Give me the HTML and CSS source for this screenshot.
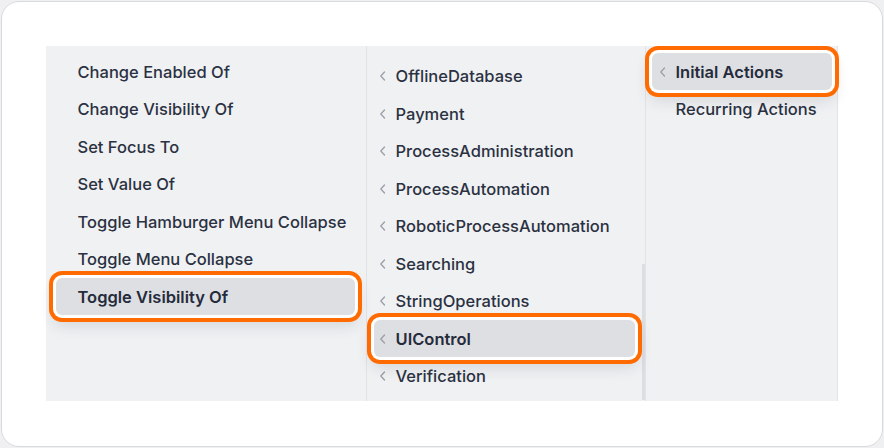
FILE: index.html
```html
<!DOCTYPE html>
<html>
<head>
<meta charset="utf-8">
<link rel="stylesheet" href="styles.css">
</head>
<body>
<div class="card">
  <div class="panel">
    <div class="col col1">
      <div class="item">Change Enabled Of</div>
      <div class="item">Change Visibility Of</div>
      <div class="item">Set Focus To</div>
      <div class="item">Set Value Of</div>
      <div class="item">Toggle Hamburger Menu Collapse</div>
      <div class="item">Toggle Menu Collapse</div>
      <div class="item selected">Toggle Visibility Of</div>
    </div>
    <div class="col col2">
      <div class="item"><svg class="chev" viewBox="0 0 8 12"><path d="M5.5 2 L1.8 6 L5.5 10"/></svg>OfflineDatabase</div>
      <div class="item"><svg class="chev" viewBox="0 0 8 12"><path d="M5.5 2 L1.8 6 L5.5 10"/></svg>Payment</div>
      <div class="item"><svg class="chev" viewBox="0 0 8 12"><path d="M5.5 2 L1.8 6 L5.5 10"/></svg>ProcessAdministration</div>
      <div class="item"><svg class="chev" viewBox="0 0 8 12"><path d="M5.5 2 L1.8 6 L5.5 10"/></svg>ProcessAutomation</div>
      <div class="item"><svg class="chev" viewBox="0 0 8 12"><path d="M5.5 2 L1.8 6 L5.5 10"/></svg>RoboticProcessAutomation</div>
      <div class="item"><svg class="chev" viewBox="0 0 8 12"><path d="M5.5 2 L1.8 6 L5.5 10"/></svg>Searching</div>
      <div class="item"><svg class="chev" viewBox="0 0 8 12"><path d="M5.5 2 L1.8 6 L5.5 10"/></svg>StringOperations</div>
      <div class="item selected"><svg class="chev" viewBox="0 0 8 12"><path d="M5.5 2 L1.8 6 L5.5 10"/></svg>UIControl</div>
      <div class="item"><svg class="chev" viewBox="0 0 8 12"><path d="M5.5 2 L1.8 6 L5.5 10"/></svg>Verification</div>
      <div class="scrollthumb"></div>
    </div>
    <div class="col col3">
      <div class="item selected"><svg class="chev" viewBox="0 0 8 12"><path d="M5.5 2 L1.8 6 L5.5 10"/></svg>Initial Actions</div>
      <div class="item plain">Recurring Actions</div>
    </div>
  </div>
</div>
</body>
</html>
```

FILE: styles.css
```css
html, body {
  margin: 0;
  padding: 0;
}
body {
  background: #eef0f2;
  width: 884px;
  height: 448px;
  font-family: Inter, "Noto Sans", sans-serif;
}
.card {
  box-sizing: border-box;
  width: 882px;
  height: 446px;
  margin: 1px;
  background: #ffffff;
  border: 1.5px solid #d8dadf;
  border-radius: 18px;
  padding: 43.5px 0 0 43.5px;
}
.panel {
  display: flex;
  width: 792px;
  height: 355px;
  background: #f0f1f3;
}
.col {
  box-sizing: border-box;
  position: relative;
  display: flex;
  flex-direction: column;
  gap: 0.5px;
  border-right: 1px solid #e1e3e7;
}
.col1 {
  width: 321px;
  padding: 7.5px 11px 0 10px;
}
.col2 {
  width: 279px;
  padding: 12px 10px 0 7px;
}
.col3 {
  width: 192px;
  padding: 7.5px 5px 0 6px;
}
.item {
  display: flex;
  align-items: center;
  height: 37px;
  flex: none;
  padding-left: 22px;
  font-size: 16.5px;
  font-weight: 500;
  color: #2b3142;
  border-radius: 6px;
  white-space: nowrap;
  position: relative;
}
.col2 .item {
  padding-left: 5px;
}
.col3 .item {
  padding-left: 7px;
}
.col3 .item.plain {
  padding-left: 24px;
}
.chev {
  width: 8px;
  height: 12px;
  margin-right: 9px;
  flex: none;
  fill: none;
  stroke: #9a9ea7;
  stroke-width: 1.3;
  stroke-linecap: round;
  stroke-linejoin: round;
}
.item.selected {
  background: #dedfe3;
  font-weight: 600;
  color: #252b3b;
  z-index: 2;
  box-shadow: 0 0 0 3px #ffffff, 0 0 0 7px #ff6b00, 0 8px 16px 2px rgba(30, 35, 50, 0.14);
}
.scrollthumb {
  position: absolute;
  right: 0;
  top: 218px;
  width: 3px;
  height: 136px;
  background: #dcdee2;
}
```
